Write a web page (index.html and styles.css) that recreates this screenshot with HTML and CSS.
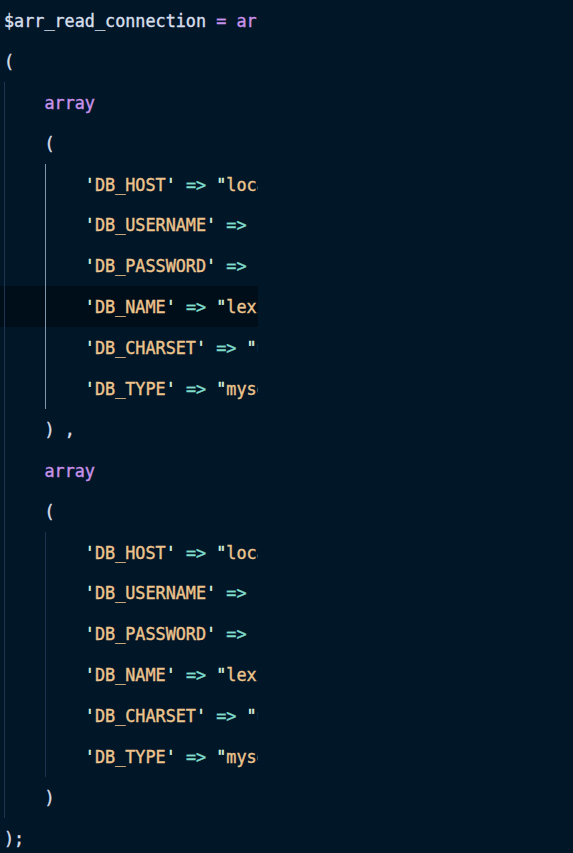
FILE: index.html
```html
<!DOCTYPE html>
<html>
<head>
<meta charset="utf-8">
<link rel="stylesheet" href="styles.css">
</head>
<body>
<div class="editor">
  <div class="line"><span class="var">$arr_read_connection</span> <span class="kw">=</span> <span class="kw">array</span></div>
  <div class="line"><span class="p">(</span></div>
  <div class="line g1">    <span class="kw">array</span></div>
  <div class="line g1">    <span class="p">(</span></div>
  <div class="line g2a">        <span class="q">'</span><span class="s">DB_HOST</span><span class="q">'</span> <span class="op">=&gt;</span> <span class="q">"</span><span class="s">localhost</span><span class="q">"</span><span class="p">,</span></div>
  <div class="line g2a">        <span class="q">'</span><span class="s">DB_USERNAME</span><span class="q">'</span> <span class="op">=&gt;</span> <span class="q">"</span><span class="s">root</span><span class="q">"</span><span class="p">,</span></div>
  <div class="line g2a">        <span class="q">'</span><span class="s">DB_PASSWORD</span><span class="q">'</span> <span class="op">=&gt;</span> <span class="q">"</span><span class="s">secret</span><span class="q">"</span><span class="p">,</span></div>
  <div class="line g2a hl">        <span class="q">'</span><span class="s">DB_NAME</span><span class="q">'</span> <span class="op">=&gt;</span> <span class="q">"</span><span class="s">lexicon</span><span class="q">"</span><span class="p">,</span></div>
  <div class="line g2a">        <span class="q">'</span><span class="s">DB_CHARSET</span><span class="q">'</span> <span class="op">=&gt;</span> <span class="q">"</span><span class="s">utf8</span><span class="q">"</span><span class="p">,</span></div>
  <div class="line g2a">        <span class="q">'</span><span class="s">DB_TYPE</span><span class="q">'</span> <span class="op">=&gt;</span> <span class="q">"</span><span class="s">mysql</span><span class="q">"</span></div>
  <div class="line g1">    <span class="p">) ,</span></div>
  <div class="line g1">    <span class="kw">array</span></div>
  <div class="line g1">    <span class="p">(</span></div>
  <div class="line g2b">        <span class="q">'</span><span class="s">DB_HOST</span><span class="q">'</span> <span class="op">=&gt;</span> <span class="q">"</span><span class="s">localhost</span><span class="q">"</span><span class="p">,</span></div>
  <div class="line g2b">        <span class="q">'</span><span class="s">DB_USERNAME</span><span class="q">'</span> <span class="op">=&gt;</span> <span class="q">"</span><span class="s">root</span><span class="q">"</span><span class="p">,</span></div>
  <div class="line g2b">        <span class="q">'</span><span class="s">DB_PASSWORD</span><span class="q">'</span> <span class="op">=&gt;</span> <span class="q">"</span><span class="s">secret</span><span class="q">"</span><span class="p">,</span></div>
  <div class="line g2b">        <span class="q">'</span><span class="s">DB_NAME</span><span class="q">'</span> <span class="op">=&gt;</span> <span class="q">"</span><span class="s">lexicon</span><span class="q">"</span><span class="p">,</span></div>
  <div class="line g2b">        <span class="q">'</span><span class="s">DB_CHARSET</span><span class="q">'</span> <span class="op">=&gt;</span> <span class="q">"</span><span class="s">utf8</span><span class="q">"</span><span class="p">,</span></div>
  <div class="line g2b">        <span class="q">'</span><span class="s">DB_TYPE</span><span class="q">'</span> <span class="op">=&gt;</span> <span class="q">"</span><span class="s">mysql</span><span class="q">"</span></div>
  <div class="line g1">    <span class="p">)</span></div>
  <div class="line"><span class="p">);</span></div>
</div>
</body>
</html>
```
FILE: styles.css
```css
html, body {
  margin: 0;
  padding: 0;
  background: #011627;
}

.editor {
  width: 258px;
  overflow: hidden;
  font-family: "DejaVu Sans Mono", monospace;
  font-size: 16.8px;
  color: #d6deeb;
  -webkit-text-stroke: 0.4px currentColor;
}

.line {
  height: 40.9px;
  line-height: 40.9px;
  padding-left: 4px;
  padding-top: 1px;
  box-sizing: border-box;
  white-space: pre;
  background-repeat: no-repeat;
}

.g1 {
  background-image: linear-gradient(#1c3450, #1c3450);
  background-size: 1px 100%;
  background-position: 4px 0;
}

.g2a {
  background-image: linear-gradient(#1c3450, #1c3450), linear-gradient(#7e97ac, #7e97ac);
  background-size: 1px 100%, 1px 100%;
  background-position: 4px 0, 45px 0;
}

.g2b {
  background-image: linear-gradient(#1c3450, #1c3450), linear-gradient(#1c3450, #1c3450);
  background-size: 1px 100%, 1px 100%;
  background-position: 4px 0, 45px 0;
}

.hl {
  background-color: rgba(0, 0, 0, 0.35);
}

.var { color: #d6deeb; }
.kw { color: #c792ea; }
.p { color: #d6deeb; }
.op { color: #7fdbca; }
.s { color: #ecc48d; }
.q { color: #d9f5dd; }
```
